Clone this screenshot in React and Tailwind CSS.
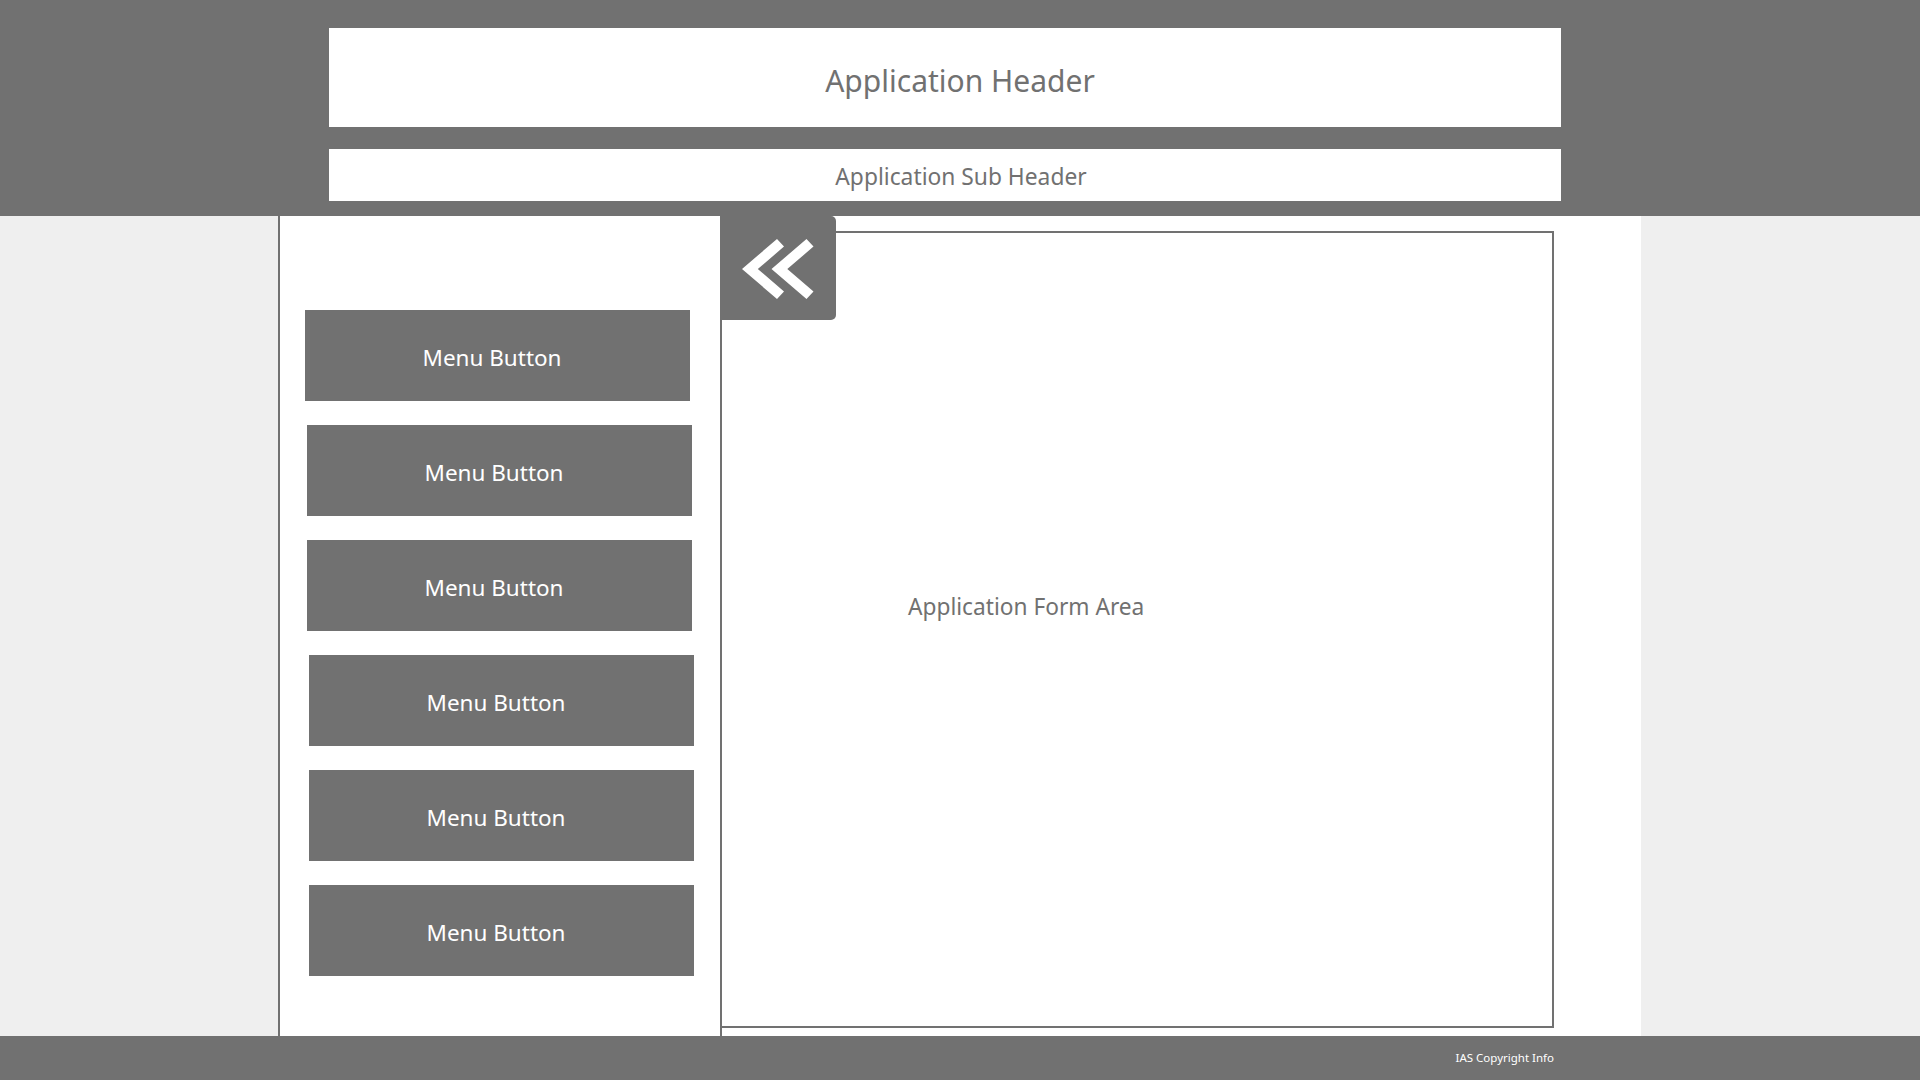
import React from 'react';

const font = { fontFamily: '"Noto Sans", "Open Sans", sans-serif' };

const menuOffsets = ['ml-[25px]', 'ml-[27px]', 'ml-[27px]', 'ml-[29px]', 'ml-[29px]', 'ml-[29px]'];

const CollapseIcon = () => (
  <svg width="116" height="104" viewBox="0 0 116 104" fill="white">
    <polygon points="22,53 57,23 64,30.6 37.8,53 64,75.4 57,83" />
    <polygon points="51.5,53 86.5,23 93.5,30.6 67.3,53 93.5,75.4 86.5,83" />
  </svg>
);

export default function App() {
  return (
    <div className="w-[1920px] h-[1080px] flex flex-col bg-[#efefef] overflow-hidden" style={font}>
      {/* Top band */}
      <div className="h-[216px] bg-[#717171] flex flex-col pt-[28px] pl-[329px] gap-[22px]">
        <div className="w-[1232px] h-[99px] bg-white flex items-center justify-center pt-[6px] pl-[30px]">
          <span className="text-[30px] text-[#717171]">Application Header</span>
        </div>
        <div className="w-[1232px] h-[52px] bg-white flex items-center justify-center pt-[4px] pl-[32px]">
          <span className="text-[22.8px] text-[#717171]">Application Sub Header</span>
        </div>
      </div>

      {/* Middle */}
      <div className="h-[820px] flex">
        <div className="ml-[278px] w-[1363px] h-full bg-white flex">
          {/* Sidebar */}
          <div className="w-[444px] h-full border-l-2 border-r-2 border-[#717171] flex flex-col pt-[94px] gap-[24px]">
            {menuOffsets.map((ml, i) => (
              <button
                key={i}
                className={`${ml} w-[385px] h-[91px] bg-[#717171] text-white text-[22.5px] flex items-center justify-center pt-[5px] pr-[11px]`}
              >
                Menu Button
              </button>
            ))}
          </div>

          {/* Form region */}
          <div className="relative pt-[15px]">
            <div className="w-[832px] h-[797px] border-t-2 border-r-2 border-b-2 border-[#717171] pl-[186px] pt-[357px]">
              <span className="text-[22.7px] text-[#717171]">Application Form Area</span>
            </div>
            <button className="absolute top-0 left-[-2px] w-[116px] h-[104px] bg-[#717171] rounded-r-[5px] flex items-center justify-center">
              <CollapseIcon />
            </button>
          </div>
        </div>
      </div>

      {/* Footer */}
      <div className="h-[44px] bg-[#717171] flex items-center justify-end pr-[366px]">
        <span className="text-[11.5px] text-white">IAS Copyright Info</span>
      </div>
    </div>
  );
}
